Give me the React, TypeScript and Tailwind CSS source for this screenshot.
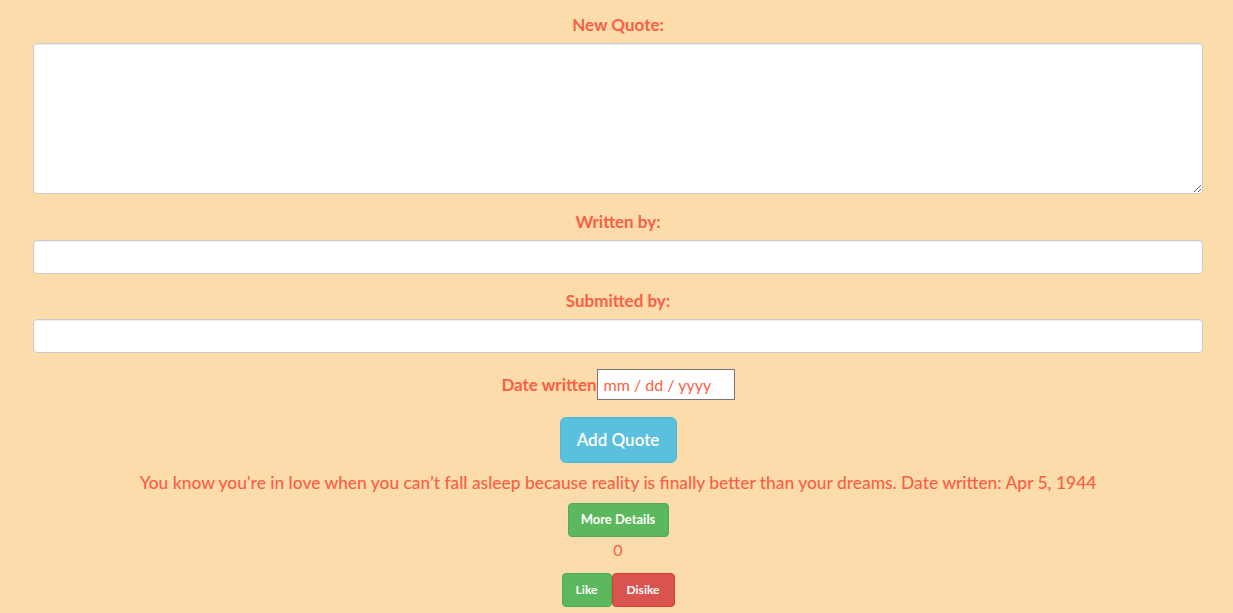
export default function App() {
  return (
    <div
      className="min-h-[613px] bg-[#fddcab] text-[#f95f45]"
      style={{ fontFamily: "Lato, 'Noto Sans', sans-serif" }}
    >
      <div className="ml-[33px] w-[1170px] pt-[14px] text-center">
        {/* Quote form */}
        <form className="flex flex-col items-stretch">
          <label className="block h-[22px] text-[17px] leading-[22px] font-bold">New Quote:</label>
          <textarea className="mt-[7px] h-[151px] w-full resize-y rounded-[4px] border border-[#ccc] bg-white shadow-[inset_0_1px_1px_rgba(0,0,0,0.075)]" />

          <label className="mt-[17px] block h-[22px] text-[17px] leading-[22px] font-bold">Written by:</label>
          <input type="text" className="mt-[7px] h-[34px] w-full rounded-[4px] border border-[#ccc] bg-white shadow-[inset_0_1px_1px_rgba(0,0,0,0.075)]" />

          <label className="mt-[16px] block h-[22px] text-[17px] leading-[22px] font-bold">Submitted by:</label>
          <input type="text" className="mt-[7px] h-[34px] w-full rounded-[4px] border border-[#ccc] bg-white shadow-[inset_0_1px_1px_rgba(0,0,0,0.075)]" />

          <div className="mt-[16px] flex items-center justify-center">
            <span className="text-[17px] font-bold">Date written</span>
            <div className="flex h-[31px] w-[138px] items-center border border-[#767676] bg-white px-[6px] text-[16px] text-[#f95f45]">
              mm / dd / yyyy
            </div>
          </div>

          <div className="mt-[17px] flex justify-center">
            <button
              type="button"
              className="h-[46px] w-[117px] rounded-[6px] border border-[#46b8da] bg-[#5bc0de] text-[17px] font-semibold text-white"
            >
              Add Quote
            </button>
          </div>
        </form>

        {/* Quote list */}
        <div className="mt-[8px] flex flex-col items-center">
          <p className="text-[17.4px] leading-[24px] font-medium">
            You know you’re in love when you can’t fall asleep because reality is finally better than your dreams. Date written: Apr 5, 1944
          </p>
          <button
            type="button"
            className="mt-[8px] h-[34px] w-[101px] rounded-[4px] border border-[#4cae4c] bg-[#5cb85c] text-[13px] font-bold text-white"
          >
            More Details
          </button>
          <div className="mt-[3px] h-[20px] text-[16px] leading-[20px]">0</div>
          <div className="mt-[13px] flex">
            <button
              type="button"
              className="h-[34px] w-[50px] rounded-[4px] border border-[#4cae4c] bg-[#5cb85c] text-[12px] font-bold text-white"
            >
              Like
            </button>
            <button
              type="button"
              className="h-[34px] w-[63px] rounded-[4px] border border-[#d43f3a] bg-[#d9534f] text-[12px] font-bold text-white"
            >
              Disike
            </button>
          </div>
        </div>
      </div>
    </div>
  );
}
